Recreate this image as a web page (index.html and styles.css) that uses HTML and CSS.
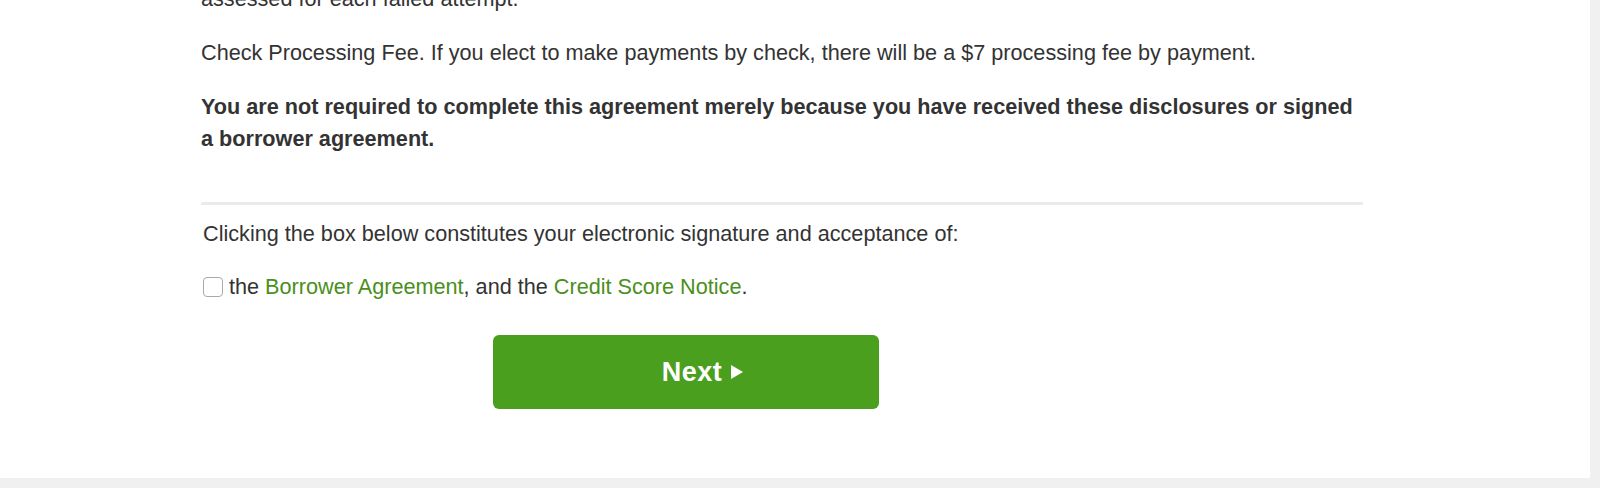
FILE: index.html
```html
<!DOCTYPE html>
<html>
<head>
<meta charset="utf-8">
<link rel="stylesheet" href="styles.css">
</head>
<body>
<div class="panel">
  <div class="content">
    <p class="para first">assessed for each failed attempt.</p>
    <p class="para">Check Processing Fee. If you elect to make payments by check, there will be a $7 processing fee by payment.</p>
    <p class="para bold">You are not required to complete this agreement merely because you have received these disclosures or signed a borrower agreement.</p>
    <hr class="divider">
    <p class="para sign">Clicking the box below constitutes your electronic signature and acceptance of:</p>
    <label class="accept">
      <span class="box"></span>
      <span>the <a class="link" href="#">Borrower Agreement</a>, and the <a class="link" href="#">Credit Score Notice</a>.</span>
    </label>
    <button class="next" type="button">Next <span class="tri"></span></button>
  </div>
</div>
</body>
</html>
```
FILE: styles.css
```css
html, body {
  margin: 0;
  padding: 0;
  background: #f0f0f0;
}
body {
  font-family: "Liberation Sans", Arial, sans-serif;
  color: #333;
  height: 488px;
  overflow: hidden;
}
.panel {
  width: 1590px;
  height: 478px;
  background: #fff;
  overflow: hidden;
}
.content {
  margin-left: 201px;
  width: 1162px;
}
.para {
  font-size: 21.65px;
  line-height: 32px;
  margin: 0 0 22px 0;
}
.first {
  margin-top: -17px;
}
.bold {
  font-weight: bold;
  margin-bottom: 48px;
}
.divider {
  border: 0;
  height: 3px;
  background: #ebebeb;
  margin: -1px 0 13px 0;
}
.sign {
  margin-left: 2px;
  margin-bottom: 21px;
}
.accept {
  display: flex;
  align-items: center;
  gap: 6px;
  margin-left: 2px;
  font-size: 21.65px;
  line-height: 32px;
  height: 32px;
}
.box {
  width: 18px;
  height: 18px;
  border: 1px solid #a9a9a9;
  border-radius: 4px;
  background: #fff;
  box-sizing: content-box;
}
.link {
  color: #4a8f1c;
  text-decoration: none;
}
.next {
  display: flex;
  align-items: center;
  justify-content: center;
  gap: 9px;
  margin: 32px 0 0 292px;
  width: 386px;
  height: 74px;
  padding: 0 0 0 33px;
  border: 0;
  border-radius: 6px;
  background: #4a9f1f;
  color: #fff;
  font-family: "Liberation Sans", Arial, sans-serif;
  font-weight: bold;
  font-size: 27px;
  letter-spacing: 0.5px;
}
.tri {
  width: 0;
  height: 0;
  border-top: 7px solid transparent;
  border-bottom: 7px solid transparent;
  border-left: 12px solid #fff;
}
```
